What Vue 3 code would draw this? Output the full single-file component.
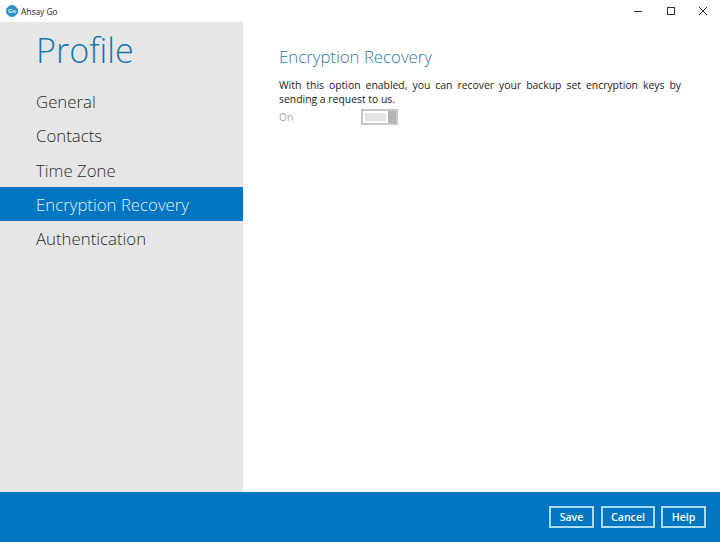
<script setup>
const items = ['General', 'Contacts', 'Time Zone', 'Encryption Recovery', 'Authentication']
</script>

<template>
  <div class="win">
    <header class="title">
      <div class="brand">
        <svg class="logo" width="12" height="12" viewBox="0 0 12 12">
          <path d="M4 .8h4L11.2 4v4L8 11.2H4L.8 8V4z" fill="#2b93c9" stroke="#2b93c9" stroke-width="1.2" stroke-linejoin="round" />
          <text x="6" y="8.2" text-anchor="middle" class="logo-text">Go</text>
        </svg>
        <span>Ahsay Go</span>
      </div>
      <div class="controls">
        <svg width="10" height="10" viewBox="0 0 10 10"><path d="M0 5.5h8" stroke="#333" fill="none" /></svg>
        <svg width="10" height="10" viewBox="0 0 10 10"><rect x="1.5" y="1.5" width="7" height="7" stroke="#333" fill="none" /></svg>
        <svg width="10" height="10" viewBox="0 0 10 10"><path d="M1 1l8 8M9 1l-8 8" stroke="#333" fill="none" /></svg>
      </div>
    </header>
    <div class="body">
      <aside class="side">
        <h1>Profile</h1>
        <nav class="nav">
          <div v-for="(it, i) in items" :key="it" class="item" :class="{ active: i === 3 }">{{ it }}</div>
        </nav>
      </aside>
      <main class="main">
        <h2>Encryption Recovery</h2>
        <p>With this option enabled, you can recover your backup set encryption keys by sending a request to us.</p>
        <div class="row">
          <span class="on">On</span>
          <div class="toggle"><div class="fill"></div><div class="knob"></div></div>
        </div>
      </main>
    </div>
    <footer class="foot">
      <button class="save">Save</button>
      <button class="cancel">Cancel</button>
      <button>Help</button>
    </footer>
  </div>
</template>

<style scoped>
.win { width: 720px; height: 542px; display: flex; flex-direction: column; background: #fff; font-family: "Open Sans", "Noto Sans", sans-serif; overflow: hidden; }
.title { height: 22px; flex: none; display: flex; justify-content: space-between; align-items: center; }
.brand { display: flex; align-items: center; gap: 3px; padding-left: 6px; font-size: 8.4px; color: #222; }
.logo-text { font-size: 6px; fill: #fff; font-weight: 600; font-family: "Open Sans", sans-serif; }
.controls { display: flex; gap: 22px; padding-right: 12px; }
.body { flex: 1; display: flex; min-height: 0; }
.side { width: 243px; flex: none; background: #e6e6e6; }
h1 { margin: 0; padding: 4px 0 0 36px; height: 62px; box-sizing: border-box; font-size: 34.2px; line-height: 48px; font-weight: 300; color: #1a76ad; }
.item { height: 34.3px; line-height: 36.5px; padding-left: 36px; font-size: 16.8px; font-weight: 300; color: #2b2b2b; white-space: nowrap; }
.item.active { background: #0075c2; color: #e4f3fb; }
.main { flex: 1; padding: 23px 39px 0 36px; }
h2 { margin: 0; font-size: 16.8px; line-height: 24px; font-weight: 300; color: #2a7aa8; }
p { margin: 9px 0 0; font-size: 10.4px; line-height: 14px; color: #222; text-align: justify; }
.row { display: flex; align-items: center; margin-top: 2px; height: 17px; }
.on { width: 82px; font-size: 10.4px; color: #aaa; }
.toggle { width: 37px; height: 16px; box-sizing: border-box; border: 2px solid #c8c8c8; display: flex; background: #fff; }
.fill { flex: 1; margin: 2px; background: #e4e4e4; }
.knob { width: 8px; background: #b4b4b4; }
.foot { height: 50px; flex: none; background: #0075c2; display: flex; justify-content: flex-end; align-items: center; gap: 6px; padding-right: 14px; }
button { height: 22px; box-sizing: border-box; border: 2px solid #a8dcf5; background: transparent; color: #fff; font-family: inherit; font-size: 10.6px; font-weight: 600; padding: 0; width: 45px; }
.save { margin-right: 1px; }
.cancel { width: 54px; }
</style>
